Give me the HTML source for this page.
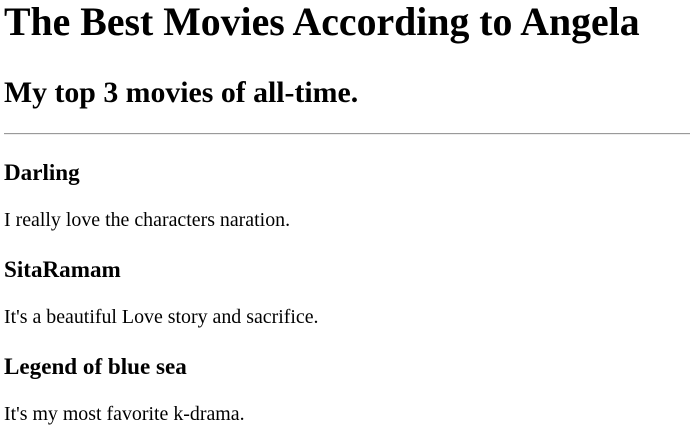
<!DOCTYPE html>
<html><head><meta charset="utf-8"><style>
html,body{margin:0;padding:0;background:#fff;}
body{padding:0 0 0 4px;font-family:"Liberation Serif",serif;color:#000;width:686px;height:441px;overflow:hidden;}
h1{font-size:39.8px;line-height:44px;margin:0 0 32px;font-weight:bold;}
h2{font-size:29.8px;line-height:33px;margin:0 0 24px;font-weight:bold;}
hr{margin:0 0 24px;border:0;border-top:1px solid #9a9a9a;border-bottom:1px solid #eee;height:0;}
h3{font-size:23.1px;line-height:26px;margin:0 0 24px;font-weight:bold;}
p{font-size:19.9px;line-height:22px;margin:0 0 25px;}
</style></head><body>
<h1>The Best Movies According to Angela</h1>
<h2>My top 3 movies of all-time.</h2>
<hr>
<h3>Darling</h3>
<p>I really love the characters naration.</p>
<h3>SitaRamam</h3>
<p>It's a beautiful Love story and sacrifice.</p>
<h3>Legend of blue sea</h3>
<p>It's my most favorite k-drama.</p>
</body></html>
